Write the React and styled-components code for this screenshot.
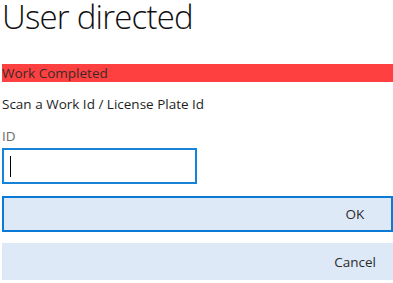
import React from "react";
import styled, { createGlobalStyle } from "styled-components";

const GlobalStyle = createGlobalStyle`
  body {
    margin: 0;
    background: #ffffff;
    font-family: "Open Sans", "Noto Sans", sans-serif;
    color: #222222;
  }
`;

const Page = styled.div`
  display: flex;
  flex-direction: column;
  padding-left: 2px;
  width: 391px;
`;

const Title = styled.h1`
  margin: 0;
  height: 34px;
  font-size: 33px;
  line-height: 34px;
  font-weight: 300;
  letter-spacing: -0.8px;
  color: #111111;
  white-space: nowrap;
`;

const StatusBar = styled.div`
  margin-top: 30px;
  height: 18px;
  line-height: 18px;
  font-size: 13.5px;
  background: #ff4040;
  color: #3a2a2a;
`;

const Prompt = styled.div`
  margin-top: 13px;
  line-height: 18px;
  font-size: 13.5px;
  color: #1e1e1e;
`;

const Label = styled.div`
  margin-top: 14px;
  line-height: 18px;
  font-size: 13.5px;
  color: #6b6b6b;
`;

const Field = styled.div`
  box-sizing: border-box;
  display: flex;
  align-items: center;
  margin-top: 3px;
  width: 195px;
  height: 36px;
  padding-left: 6px;
  border: 2px solid #1683d8;
  background: #ffffff;
`;

const Caret = styled.span`
  width: 1px;
  height: 21px;
  background: #000000;
`;

const Button = styled.div`
  box-sizing: border-box;
  display: flex;
  align-items: center;
  justify-content: flex-end;
  margin-top: ${(p) => p.$gap}px;
  height: ${(p) => p.$h}px;
  padding-right: ${(p) => (p.$focused ? 14 : 16)}px;
  background: #dee9f7;
  border: ${(p) => (p.$focused ? "2px solid #0b7ad6" : "none")};
  font-size: 13.5px;
  font-weight: 400;
  color: #2b2b2b;
`;

const ButtonText = styled.span`
  width: 44px;
  text-align: center;
`;

export default function App() {
  return (
    <>
      <GlobalStyle />
      <Page>
        <Title>User directed</Title>
        <StatusBar>Work Completed</StatusBar>
        <Prompt>Scan a Work Id / License Plate Id</Prompt>
        <Label>ID</Label>
        <Field>
          <Caret />
        </Field>
        <Button $focused $gap={12} $h={36}>
          <ButtonText>OK</ButtonText>
        </Button>
        <Button $gap={11} $h={37}>
          <ButtonText>Cancel</ButtonText>
        </Button>
      </Page>
    </>
  );
}
